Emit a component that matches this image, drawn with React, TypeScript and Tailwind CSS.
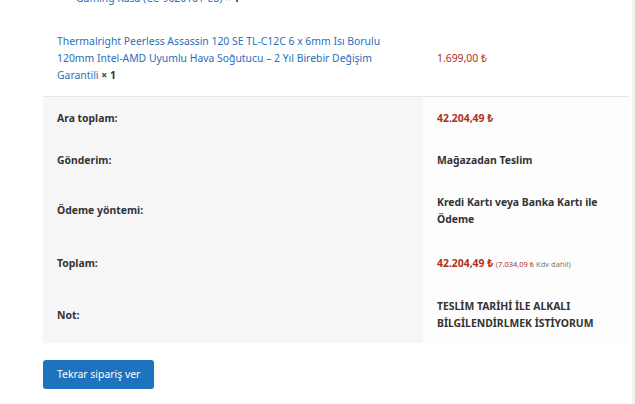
import React from 'react';

const font = { fontFamily: '"Noto Sans", "Open Sans", sans-serif' };

const rows = [
  { label: 'Ara toplam:', h: 'h-[42px]', value: <span className="text-[#b0301c]">42.204,49 ₺</span> },
  { label: 'Gönderim:', h: 'h-[42px]', value: <span>Mağazadan Teslim</span> },
  {
    label: 'Ödeme yöntemi:',
    h: 'h-[59px]',
    value: (
      <span>
        Kredi Kartı veya Banka Kartı ile
        <br />
        Ödeme
      </span>
    ),
  },
  {
    label: 'Toplam:',
    h: 'h-[47px]',
    value: (
      <span>
        <span className="text-[#b0301c]">42.204,49 ₺</span>{' '}
        <span className="text-[7.5px] font-normal text-[#777]">
          (<span className="text-[#b0301c]">7.034,09 ₺</span> Kdv dahil)
        </span>
      </span>
    ),
  },
  {
    label: 'Not:',
    h: 'h-[56px]',
    value: (
      <span>
        TESLİM TARİHİ İLE ALKALI
        <br />
        BİLGİLENDİRLMEK İSTİYORUM
      </span>
    ),
  },
];

const App = () => {
  return (
    <div className="flex h-[404px] w-[635px] overflow-hidden bg-white text-[10.4px] text-[#333]" style={font}>
      <div className="flex-1 pl-[43px] pr-[3px]">
        <div className="-mt-[10px] h-[106px]">
          <div className="pl-[33px] leading-[17px] text-[#2a6ebb]">
            Gaming Kasa (CC-9020101-E8) <strong className="text-[#333]">× 1</strong>
          </div>
          <div className="mt-[26px] flex">
            <div className="w-[380px] px-[14px] leading-[17px] text-[#2a6ebb]">
              Thermalright Peerless Assassin 120 SE TL-C12C 6 x 6mm Isı Borulu
              <br />
              120mm Intel-AMD Uyumlu Hava Soğutucu – 2 Yıl Birebir Değişim
              <br />
              Garantili <strong className="text-[#333]">× 1</strong>
            </div>
            <div className="flex flex-1 items-center px-[14px] text-[#b0301c]">1.699,00 ₺</div>
          </div>
        </div>
        <div className="border-t border-[#e6e6e6]">
          {rows.map(r => (
            <div key={r.label} className={`flex ${r.h}`}>
              <div className="flex w-[380px] items-center bg-[#f6f6f6] px-[14px] font-bold leading-[17px]">{r.label}</div>
              <div className="flex flex-1 items-center bg-[#fdfdfd] px-[14px] font-bold leading-[17px]">{r.value}</div>
            </div>
          ))}
        </div>
        <button className="mt-[17px] h-[29px] rounded-[3px] bg-[#1e73be] px-[14px] text-[10.4px] text-white">
          Tekrar sipariş ver
        </button>
      </div>
      <div className="w-[3px] bg-[#f2f2f2]" />
    </div>
  );
};

export default App;
